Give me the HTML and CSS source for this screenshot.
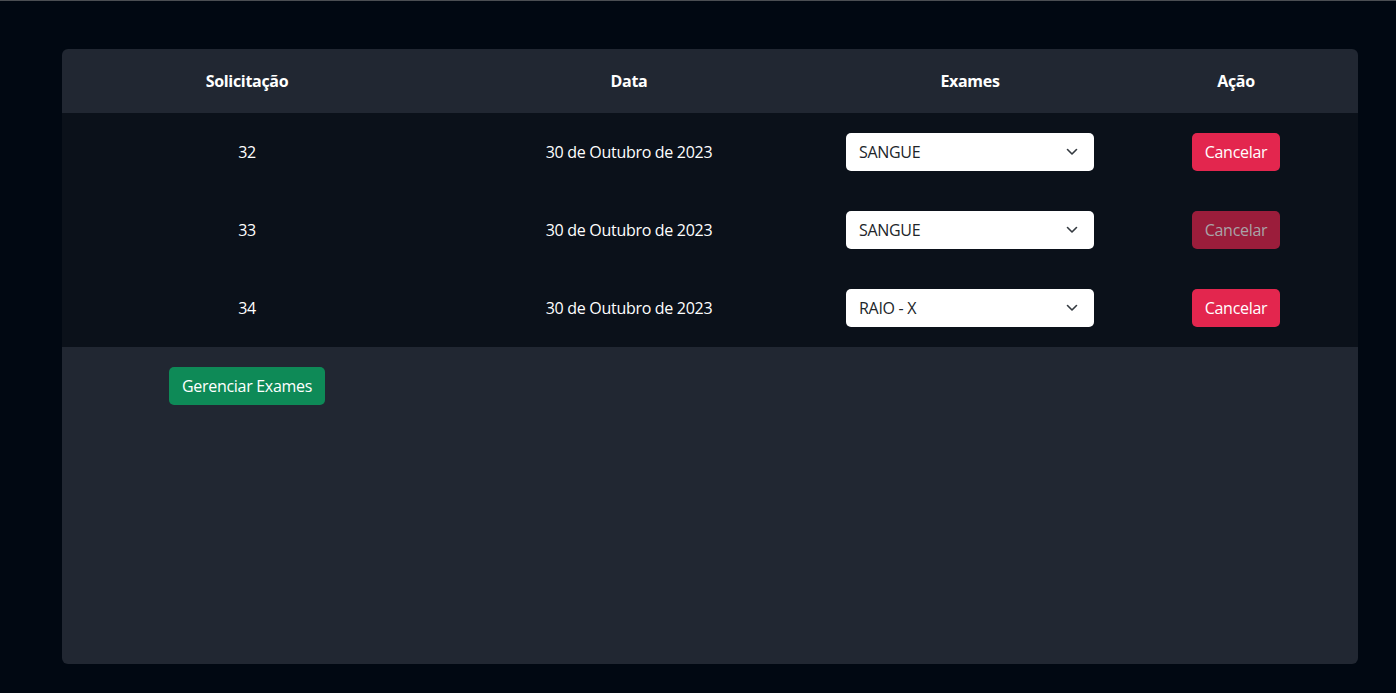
FILE: index.html
```html
<!DOCTYPE html>
<html lang="pt-BR">
<head>
<meta charset="utf-8">
<title>Exames</title>
<link rel="stylesheet" href="styles.css">
</head>
<body>
<div class="page">
  <div class="card">
    <table class="tbl">
      <colgroup>
        <col class="c1"><col class="c2"><col class="c3"><col class="c4">
      </colgroup>
      <thead>
        <tr><th>Solicitação</th><th>Data</th><th>Exames</th><th>Ação</th></tr>
      </thead>
      <tbody>
        <tr>
          <td>32</td><td>30 de Outubro de 2023</td>
          <td><div class="select"><span>SANGUE</span><svg width="12" height="8" viewBox="0 0 12 8"><path d="M1.5 1.5 L6 6 L10.5 1.5" fill="none" stroke="#343a40" stroke-width="1.6" stroke-linecap="round" stroke-linejoin="round"/></svg></div></td>
          <td><button class="btn btn-red">Cancelar</button></td>
        </tr>
        <tr>
          <td>33</td><td>30 de Outubro de 2023</td>
          <td><div class="select"><span>SANGUE</span><svg width="12" height="8" viewBox="0 0 12 8"><path d="M1.5 1.5 L6 6 L10.5 1.5" fill="none" stroke="#343a40" stroke-width="1.6" stroke-linecap="round" stroke-linejoin="round"/></svg></div></td>
          <td><button class="btn btn-red disabled">Cancelar</button></td>
        </tr>
        <tr>
          <td>34</td><td>30 de Outubro de 2023</td>
          <td><div class="select"><span>RAIO - X</span><svg width="12" height="8" viewBox="0 0 12 8"><path d="M1.5 1.5 L6 6 L10.5 1.5" fill="none" stroke="#343a40" stroke-width="1.6" stroke-linecap="round" stroke-linejoin="round"/></svg></div></td>
          <td><button class="btn btn-red">Cancelar</button></td>
        </tr>
      </tbody>
    </table>
    <div class="footer">
      <div class="footer-cell"><button class="btn btn-green">Gerenciar Exames</button></div>
    </div>
  </div>
</div>
</body>
</html>
```
FILE: styles.css
```css
html, body {
  margin: 0;
  padding: 0;
}
body {
  background: #010812;
  border-top: 1px solid #4b4e53;
  font-family: "Open Sans", "Noto Sans", sans-serif;
  font-size: 16px;
  letter-spacing: -0.3px;
  color: #fff;
  height: 692px;
  overflow: hidden;
}
.page {
  padding: 48px 38px 0 62px;
}
.card {
  width: 1296px;
  height: 615px;
  background: #212732;
  border-radius: 6px;
  overflow: hidden;
}
.tbl {
  width: 1296px;
  border-collapse: collapse;
  table-layout: fixed;
}
.c1 { width: 370px; }
.c2 { width: 394px; }
.c3 { width: 288px; }
.c4 { width: 244px; }
.tbl th {
  height: 64px;
  padding: 0;
  font-weight: 700;
  font-size: 16px;
  text-align: center;
  vertical-align: middle;
}
.tbl tbody tr {
  background: #0b111a;
}
.tbl td {
  height: 78px;
  padding: 0 20px;
  text-align: center;
  vertical-align: middle;
  box-sizing: border-box;
}
.select {
  height: 38px;
  background: #fff;
  border-radius: 5px;
  display: flex;
  align-items: center;
  justify-content: space-between;
  padding: 0 16px 0 13px;
  color: #212529;
  text-align: left;
}
.btn {
  font-family: inherit;
  font-size: 16px;
  letter-spacing: -0.3px;
  height: 38px;
  border: none;
  border-radius: 5px;
  color: #fff;
  padding: 0 13px;
  cursor: pointer;
}
.btn-red {
  background: #e3264e;
  width: 88px;
  padding: 0;
}
.btn-red.disabled {
  background: #9b1d3b;
  color: #a9a3a8;
}
.btn-green {
  background: #0e8a57;
  width: 156px;
  padding: 0;
}
.footer {
  display: flex;
  padding-top: 20px;
}
.footer-cell {
  width: 370px;
  display: flex;
  justify-content: center;
}
```
